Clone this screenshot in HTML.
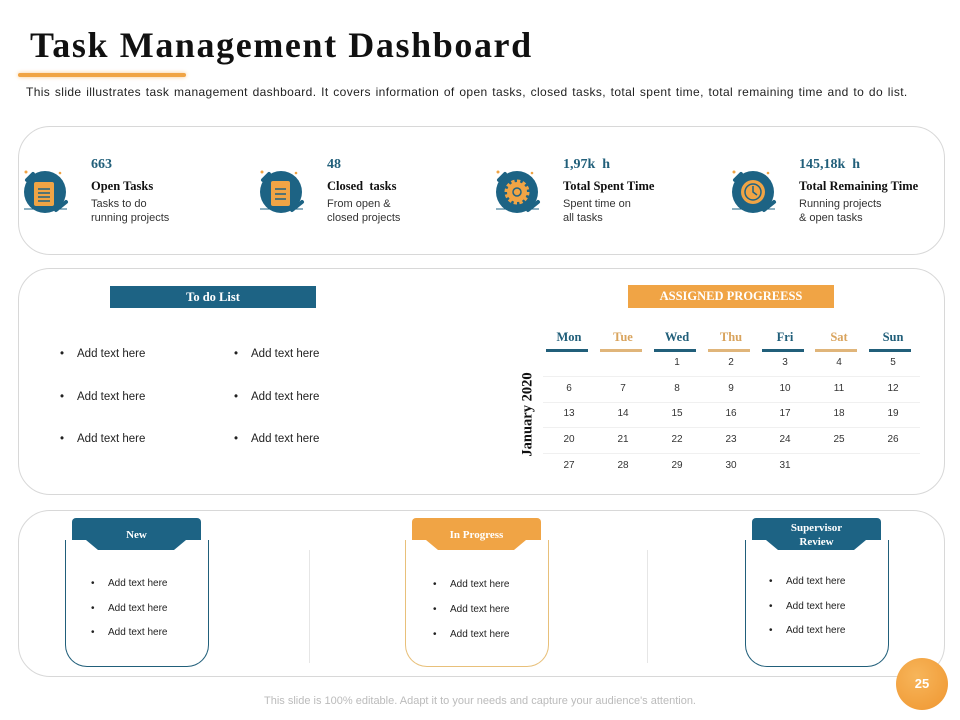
<!DOCTYPE html>
<html><head><meta charset="utf-8"><style>
*{margin:0;padding:0;box-sizing:border-box}
body{width:960px;height:720px;background:#fff;position:relative;overflow:hidden;font-family:"Liberation Sans",Arial,sans-serif;color:#222}
.a{position:absolute}
.serif{font-family:"Liberation Serif",serif;font-weight:bold}
.panel{position:absolute;left:18px;width:927px;border:1px solid #d8d8d8;border-radius:32px;background:#fff}
.num{font-family:"Liberation Serif",serif;font-weight:bold;color:#215f7a;font-size:14px}
.ttl{font-family:"Liberation Serif",serif;font-weight:bold;font-size:12.5px;color:#111}
.desc{font-size:11px;color:#333;line-height:14px}
.li{font-size:11.5px;color:#222}
.li:before{content:"•";position:absolute;left:-17px}
.day{position:absolute;width:54px;text-align:center;font-family:"Liberation Serif",serif;font-weight:bold;font-size:12.5px}
.ul{position:absolute;height:3px;width:42px}
.d{position:absolute;width:54px;text-align:center;font-size:10px;color:#333}
.hl{position:absolute;left:543px;width:377px;height:1px;background:#f0f0f0}
.cb{position:absolute;width:144px;height:127px;border:1px solid #215f7a;border-top:none;border-radius:0 0 22px 22px}
.ch{position:absolute;width:129px;height:22px;border-radius:4px 4px 0 0;color:#fff;font-family:"Liberation Serif",serif;font-weight:bold;font-size:11px;text-align:center}
.tab{position:absolute;height:10px;clip-path:polygon(0 0,100% 0,88% 100%,12% 100%)}
.ci{font-size:10px;color:#222;position:absolute}
.ci:before{content:"•";position:absolute;left:-17px}
</style></head><body>
<div class="a serif" style="left:30px;top:24px;font-size:36px;color:#111;letter-spacing:1.6px">Task Management Dashboard</div>
<div class="a" style="left:18px;top:73px;width:168px;height:4px;background:#f0a445;border-radius:2px;box-shadow:0 0 4px #f7c78a"></div>
<div class="a" style="left:26px;top:85px;font-size:12px;color:#222;word-spacing:1px;letter-spacing:0.38px;white-space:nowrap">This slide illustrates task management  dashboard. It covers information  of open tasks, closed tasks, total spent time, total remaining time and to do list.</div>

<div class="panel" style="top:126px;height:129px"></div>
<svg class="a" style="left:0;top:160px" width="960" height="60">
<g id="ic">
<circle cx="45" cy="32" r="21" fill="#1d6384"/>
<line x1="27" y1="20" x2="33" y2="14" stroke="#1d6384" stroke-width="4" stroke-linecap="round"/>
<line x1="56" y1="50" x2="66" y2="42" stroke="#1d6384" stroke-width="4" stroke-linecap="round"/>
<circle cx="26" cy="12" r="1.5" fill="#f0a445"/><circle cx="60" cy="13" r="1.3" fill="#f0a445"/>
<line x1="24" y1="49" x2="67" y2="49" stroke="#1d6384" stroke-width="1"/>
</g>
<rect x="34" y="22" width="20" height="24" rx="2" fill="#f0a445"/><g stroke="#1d6384" stroke-width="1.5"><line x1="38" y1="29" x2="50" y2="29"/><line x1="38" y1="33" x2="50" y2="33"/><line x1="38" y1="37" x2="50" y2="37"/><line x1="38" y1="41" x2="50" y2="41"/></g>
<use href="#ic" x="236"/>
<rect x="271" y="21" width="19" height="25" rx="2" fill="#f0a445"/><g stroke="#1d6384" stroke-width="1.5"><line x1="275" y1="29" x2="286" y2="29"/><line x1="275" y1="34" x2="286" y2="34"/><line x1="275" y1="39" x2="286" y2="39"/></g>
<use href="#ic" x="472"/>
<circle cx="517" cy="32" r="10" fill="#f0a445" stroke="#f0a445" stroke-width="5" stroke-dasharray="3 2.2"/><circle cx="517" cy="32" r="4" fill="none" stroke="#1d6384" stroke-width="1.5"/>
<use href="#ic" x="708"/>
<circle cx="753" cy="32" r="12" fill="#f0a445"/><circle cx="753" cy="32" r="8" fill="none" stroke="#1d6384" stroke-width="1.5"/><path d="M753 26v6l4 3" stroke="#1d6384" stroke-width="1.5" fill="none"/>
</svg>
<div class="a" style="left:91px;top:157px"><div class="num">663</div><div class="ttl" style="margin-top:6px">Open Tasks</div><div class="desc" style="margin-top:3px">Tasks to do<br>running projects</div></div>
<div class="a" style="left:327px;top:157px"><div class="num">48</div><div class="ttl" style="margin-top:6px">Closed&nbsp; tasks</div><div class="desc" style="margin-top:3px">From open &amp;<br>closed projects</div></div>
<div class="a" style="left:563px;top:157px"><div class="num">1,97k&nbsp; h</div><div class="ttl" style="margin-top:6px">Total Spent Time</div><div class="desc" style="margin-top:3px">Spent time on<br>all tasks</div></div>
<div class="a" style="left:799px;top:157px"><div class="num">145,18k&nbsp; h</div><div class="ttl" style="margin-top:6px">Total Remaining Time</div><div class="desc" style="margin-top:3px">Running projects<br>&amp; open tasks</div></div>

<div class="panel" style="top:268px;height:227px"></div>
<div class="a serif" style="left:110px;top:286px;width:206px;height:22px;background:#1d6384;color:#fff;font-size:12.5px;text-align:center;line-height:22px">To do List</div>
<div class="a li" style="left:77px;top:348px">Add text here</div>
<div class="a li" style="left:77px;top:391px">Add text here</div>
<div class="a li" style="left:77px;top:433px">Add text here</div>
<div class="a li" style="left:251px;top:348px">Add text here</div>
<div class="a li" style="left:251px;top:391px">Add text here</div>
<div class="a li" style="left:251px;top:433px">Add text here</div>

<div class="a serif" style="left:628px;top:285px;width:206px;height:23px;background:#f0a445;color:#fff;font-size:12.5px;text-align:center;line-height:23px">ASSIGNED PROGREESS</div>
<div class="a serif" style="left:460px;top:406px;width:136px;text-align:center;transform:rotate(-90deg);font-size:14.5px;color:#111">January 2020</div>
<div class="day" style="left:542px;top:330px;color:#215f7a">Mon</div>
<div class="day" style="left:596px;top:330px;color:#d9a45e">Tue</div>
<div class="day" style="left:650px;top:330px;color:#215f7a">Wed</div>
<div class="day" style="left:704px;top:330px;color:#d9a45e">Thu</div>
<div class="day" style="left:758px;top:330px;color:#215f7a">Fri</div>
<div class="day" style="left:812px;top:330px;color:#d9a45e">Sat</div>
<div class="day" style="left:866px;top:330px;color:#215f7a">Sun</div>
<div class="ul" style="left:546px;top:349px;background:#215f7a"></div>
<div class="ul" style="left:600px;top:349px;background:#e0b57a"></div>
<div class="ul" style="left:654px;top:349px;background:#215f7a"></div>
<div class="ul" style="left:708px;top:349px;background:#e0b57a"></div>
<div class="ul" style="left:762px;top:349px;background:#215f7a"></div>
<div class="ul" style="left:815px;top:349px;background:#e0b57a"></div>
<div class="ul" style="left:869px;top:349px;background:#215f7a"></div>
<div class="hl" style="top:376px"></div><div class="hl" style="top:402px"></div><div class="hl" style="top:427px"></div><div class="hl" style="top:453px"></div>
<div class="d" style="left:650px;top:357px">1</div><div class="d" style="left:704px;top:357px">2</div><div class="d" style="left:758px;top:357px">3</div><div class="d" style="left:812px;top:357px">4</div><div class="d" style="left:866px;top:357px">5</div>
<div class="d" style="left:542px;top:383px">6</div><div class="d" style="left:596px;top:383px">7</div><div class="d" style="left:650px;top:383px">8</div><div class="d" style="left:704px;top:383px">9</div><div class="d" style="left:758px;top:383px">10</div><div class="d" style="left:812px;top:383px">11</div><div class="d" style="left:866px;top:383px">12</div>
<div class="d" style="left:542px;top:408px">13</div><div class="d" style="left:596px;top:408px">14</div><div class="d" style="left:650px;top:408px">15</div><div class="d" style="left:704px;top:408px">16</div><div class="d" style="left:758px;top:408px">17</div><div class="d" style="left:812px;top:408px">18</div><div class="d" style="left:866px;top:408px">19</div>
<div class="d" style="left:542px;top:434px">20</div><div class="d" style="left:596px;top:434px">21</div><div class="d" style="left:650px;top:434px">22</div><div class="d" style="left:704px;top:434px">23</div><div class="d" style="left:758px;top:434px">24</div><div class="d" style="left:812px;top:434px">25</div><div class="d" style="left:866px;top:434px">26</div>
<div class="d" style="left:542px;top:460px">27</div><div class="d" style="left:596px;top:460px">28</div><div class="d" style="left:650px;top:460px">29</div><div class="d" style="left:704px;top:460px">30</div><div class="d" style="left:758px;top:460px">31</div>

<div class="panel" style="top:510px;height:167px"></div>
<div class="a" style="left:309px;top:550px;width:1px;height:113px;background:#e6e6e6"></div>
<div class="a" style="left:647px;top:550px;width:1px;height:113px;background:#e6e6e6"></div>

<div class="cb" style="left:65px;top:540px"></div>
<div class="ch" style="left:72px;top:518px;background:#1d6384"></div>
<div class="tab" style="left:86px;top:540px;width:100px;background:#1d6384"></div>
<div class="a serif" style="left:72px;top:529px;width:129px;text-align:center;color:#fff;font-size:11px">New</div>
<div class="ci" style="left:108px;top:578px">Add text here</div><div class="ci" style="left:108px;top:603px">Add text here</div><div class="ci" style="left:108px;top:627px">Add text here</div>

<div class="cb" style="left:405px;top:540px;border-color:#e8c07a"></div>
<div class="ch" style="left:412px;top:518px;background:#f0a445"></div>
<div class="tab" style="left:426px;top:540px;width:100px;background:#f0a445"></div>
<div class="a serif" style="left:412px;top:529px;width:129px;text-align:center;color:#fff;font-size:11px">In Progress</div>
<div class="ci" style="left:450px;top:579px">Add text here</div><div class="ci" style="left:450px;top:604px">Add text here</div><div class="ci" style="left:450px;top:629px">Add text here</div>

<div class="cb" style="left:745px;top:540px"></div>
<div class="ch" style="left:752px;top:518px;background:#1d6384"></div>
<div class="tab" style="left:766px;top:540px;width:100px;background:#1d6384"></div>
<div class="a serif" style="left:752px;top:521px;width:129px;text-align:center;color:#fff;font-size:11px;line-height:14px">Supervisor<br>Review</div>
<div class="ci" style="left:786px;top:576px">Add text here</div><div class="ci" style="left:786px;top:601px">Add text here</div><div class="ci" style="left:786px;top:625px">Add text here</div>

<div class="a" style="left:896px;top:658px;width:52px;height:52px;border-radius:50%;background:radial-gradient(circle at 40% 35%,#f7b55a,#ef9630);color:#fff;font-weight:bold;font-size:13px;text-align:center;line-height:52px">25</div>
<div class="a" style="left:0;top:695px;width:960px;text-align:center;font-size:11px;color:#bbb">This slide is 100% editable. Adapt it to your needs and capture your audience's attention.</div>
</body></html>
